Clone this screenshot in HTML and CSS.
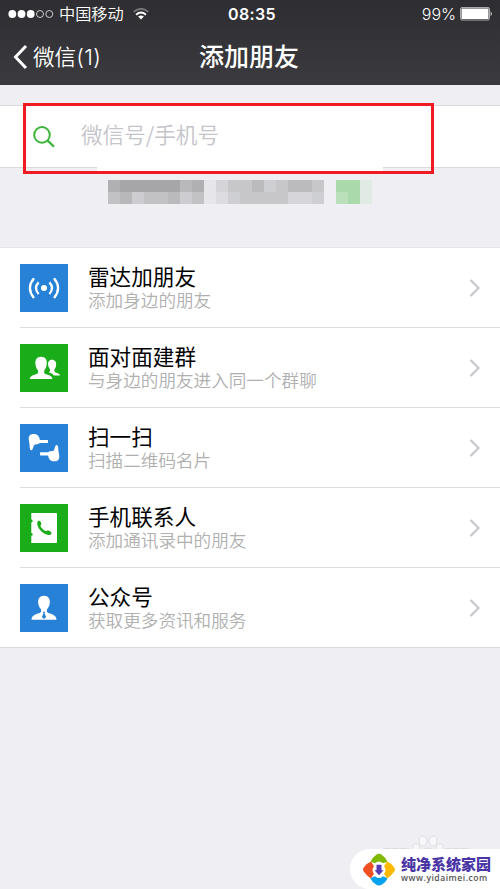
FILE: index.html
```html
<!DOCTYPE html>
<html lang="zh-CN">
<head>
<meta charset="utf-8">
<title>添加朋友</title>
<link rel="stylesheet" href="styles.css">
</head>
<body>
<header class="top">
  <div class="status">
    <div class="carrier">
      <svg class="signal" width="46" height="10" viewBox="0 0 46 10"><g fill="#fff"><circle cx="4.3" cy="5" r="3.9"/><circle cx="13.5" cy="5" r="3.9"/><circle cx="22.7" cy="5" r="3.9"/></g><g fill="none" stroke="#d8d8da" stroke-width=".9"><circle cx="32" cy="5" r="3.5"/><circle cx="41.3" cy="5" r="3.5"/></g></svg>
      <span class="operator">中国移动</span>
      <svg class="wifi" width="16" height="12" viewBox="0 0 16 12"><path d="M.7 3.9Q8-2.2 15.3 3.9" fill="none" stroke="#77777b" stroke-width="1.8"/><path d="M3.1 6.7Q8 2.5 12.9 6.7" fill="none" stroke="#fff" stroke-width="1.9"/><path d="M8 11.5 5.1 8.6Q8 6.3 10.9 8.6Z" fill="#fff"/></svg>
    </div>
    <div class="clock">08:35</div>
    <div class="power"><span>99%</span>
      <svg width="33" height="14" viewBox="0 0 33 14"><rect x=".5" y=".5" width="29" height="12.5" rx="1.5" fill="none" stroke="#aaaaac"/><rect x="1.5" y="1.5" width="27" height="10.5" fill="#fff"/><path d="M30.7 4.3Q32.6 6.7 30.7 9.2Z" fill="#fff"/></svg>
    </div>
  </div>
  <nav class="nav">
    <div class="back"><svg width="15" height="26" viewBox="0 0 15 26"><path d="M13 2 2.5 13 13 24" fill="none" stroke="#fff" stroke-width="3"/></svg><span>微信<span class="count">(1)</span></span></div>
    <h1>添加朋友</h1>
  </nav>
</header>
<main>
  <section class="search">
    <svg class="glass" width="22" height="22" viewBox="0 0 22 22"><circle cx="9" cy="8.9" r="7.8" fill="none" stroke="#3cb43b" stroke-width="2"/><path d="m14.7 14.6 6.3 6.2" stroke="#3cb43b" stroke-width="2.2"/></svg>
    <span class="placeholder">微信号/手机号</span>
    <div class="cover"></div>
    <div class="highlight"></div>
  </section>
  <svg class="mosaic" width="264" height="24" viewBox="0 0 22 2" shape-rendering="crispEdges">
    <path fill="#b0b0b2" d="M0 0h8v1H0z"/><path fill="#a6a6a8" d="M1 0h5v1H1z"/><path fill="#b9b9bc" d="M6 0h1v1H6z"/>
    <path fill="#c2c2c5" d="M0 1h8v1H0z"/><path fill="#b8b8bb" d="M1 1h1v1H1z"/><path fill="#cdcdd1" d="M2 1h1v1H2zM6 1h1v1H6z"/><path fill="#bababd" d="M5 1h1v1H5z"/>
    <path fill="#e6e6ea" d="M8 0h1v2H8z"/><path fill="#d5d5d9" d="M9 0h1v1H9z"/><path fill="#dddde1" d="M9 1h1v1H9z"/>
    <path fill="#c7c7ca" d="M10 0h8v2h-8z"/><path fill="#bbbbbe" d="M12 0h1v1h-1zM15 0h2v1h-2z"/><path fill="#cecfd2" d="M13 0h1v1h-1zM10 1h1v1h-1zM17 1h1v1h-1z"/><path fill="#d6d6da" d="M15 1h2v1h-2z"/>
    <path fill="#aadaac" d="M19 0h2v1h-2zM20 1h1v1h-1z"/><path fill="#b9e0bb" d="M19 1h1v1h-1z"/><path fill="#dfebe4" d="M21 0h1v2h-1z"/>
  </svg>
  <ul class="list">
    <li><svg class="icon blue" viewBox="0 0 48 48"><circle cx="24" cy="24" r="3" fill="#fff"/><g fill="none" stroke="#fff" stroke-width="2.3"><path d="M18.6 18.4Q13.4 24 18.6 30M29.4 18.4Q34.6 24 29.4 30M14 14.2Q5.8 24 14 34M34 14.2Q42.2 24 34 34"/></g></svg>
      <div class="text"><h2>雷达加朋友</h2><p>添加身边的朋友</p></div><svg class="chev" viewBox="0 0 12 18"><path d="m1.5 1 8 8-8 8"/></svg></li>
    <li><svg class="icon green" viewBox="0 0 48 48"><path fill="#fff" d="M32 15.7c-3.2 0-4.4 2.6-3.8 5.6.3 1.9 1 3.1 1.9 4.2v1.8l-1.4.9c2.2 1 4.4 1.6 5.2 3.2H40c0-2.2-5.6-2.4-5.6-4.1v-1.8c1-1.1 1.5-2.3 1.7-4.2.4-3.4-1-5.6-4.1-5.6Z"/><path fill="#fff" d="M21.1 12.8c-4.2 0-6.3 3-5.6 7.5.3 2.9 1.3 4.8 2.5 6.2v2.3c0 2.2-8.2 1.6-8.2 6.3h22.6c0-4.7-8.2-4.1-8.2-6.3v-2.3c1.2-1.4 2.2-3.3 2.5-6.2.7-4.5-1.4-7.5-5.6-7.5Z"/></svg>
      <div class="text"><h2>面对面建群</h2><p>与身边的朋友进入同一个群聊</p></div><svg class="chev" viewBox="0 0 12 18"><path d="m1.5 1 8 8-8 8"/></svg></li>
    <li><svg class="icon blue" viewBox="0 0 48 48"><path id="hand" fill="#fff" d="M8.7 15c0-3.6 2-4.9 5.3-4.9 3.5 0 5.3 2.2 5.9 5.8h8v3.2H20q-2 1.6-5.3 1.3c-1.9 1.8-1.1 4.9-3.3 5.9-2-.4-1.6-3.5-1.9-6Z"/><use href="#hand" transform="rotate(180 24 23.7)"/></svg>
      <div class="text"><h2>扫一扫</h2><p>扫描二维码名片</p></div><svg class="chev" viewBox="0 0 12 18"><path d="m1.5 1 8 8-8 8"/></svg></li>
    <li><svg class="icon green" viewBox="0 0 48 48"><path fill="#fff" d="M11.3 9H36a1 1 0 0 1 1 1v28a1 1 0 0 1-1 1H11.3v-7.2a1.4 1.4 0 0 0 0-2.8V18.4a1.4 1.4 0 0 0 0-2.8Z"/><path fill="#1aad19" d="M17.9 17.2c1.1-1 2.6-.2 3.2 1.6.5 1.5.1 2.3-.8 3 1.3 2.5 3.1 4.3 5.5 5.5 1-.8 2.2-1 3.7-.4 1.8.7 2.4 2 1.7 3-1.3 1.9-5 1.5-8.5-1.3-3.4-2.8-7-8.3-4.8-11.4Z"/></svg>
      <div class="text"><h2>手机联系人</h2><p>添加通讯录中的朋友</p></div><svg class="chev" viewBox="0 0 12 18"><path d="m1.5 1 8 8-8 8"/></svg></li>
    <li><svg class="icon blue" viewBox="0 0 48 48"><path fill="#fff" d="M24 11.8c-4.3 0-6.5 3.1-5.7 7.7.4 2.8 1.5 4.6 2.8 5.9v2.2c0 2.4-9.6 1.8-9.6 8.2h25c0-6.4-9.6-5.8-9.6-8.2v-2.2c1.3-1.3 2.4-3.1 2.8-5.9.8-4.6-1.4-7.7-5.7-7.7Z"/><path fill="#2782d7" d="M23 27.8h2l-.4 1.8 1.5 3.4-2.1 2-2.1-2 1.5-3.4Z"/></svg>
      <div class="text"><h2>公众号</h2><p>获取更多资讯和服务</p></div><svg class="chev" viewBox="0 0 12 18"><path d="m1.5 1 8 8-8 8"/></svg></li>
  </ul>
</main>
<svg class="paw" width="86" height="30" viewBox="0 0 86 30"><g fill="#f7f7f9" stroke="#dddde1"><ellipse cx="39" cy="6" rx="4" ry="5"/><ellipse cx="49" cy="6" rx="4" ry="5"/><ellipse cx="32" cy="13" rx="3.5" ry="4.5"/><ellipse cx="56" cy="13" rx="3.5" ry="4.5"/><path d="M33 24q3-11 11-11t11 11z"/></g><path d="M0 14h25M61 14h25" stroke="#dcdce0" stroke-width="2" stroke-dasharray="7 1"/></svg>
<aside class="brand">
  <svg width="32" height="33" viewBox="0 0 32 33"><path fill="#81b900" d="M7.5 8.8Q9 4.7 13 2q3-2.7 6 0 4 2.7 5.5 6.8L20 10.2q-4-3.3-8 0Z"/><path fill="#f25022" d="M8 8.4 11 13.2q-3 3.8 0 7.6l-3 4.8Q4.2 23.3 1.5 19.5q-3-3 0-6Q4.2 10 8 8.4Z"/><path fill="#ffb900" d="M24 8.4 21 13.2q3 3.8 0 7.6l3 4.8q3.8-2.3 6.5-6.1 3-3 0-6-2.7-3.5-6.5-5.1Z"/><path fill="#00a1ed" d="M7.5 25.2 12 23.2q4 3.8 8 0l4.5 2q-1.5 4-5.5 6.2-3 2.3-6 0-4-2.2-5.5-6.2Z"/><path fill="#553bb5" d="M13.5 11.8h5v5.4h2L16 22.2l-4.5-5h2Z"/></svg>
  <div class="brand-text"><b>纯净系统家园</b><span>www.yidaimei.com</span></div>
</aside>
</body>
</html>
```
FILE: styles.css
```css
* { box-sizing: border-box; }
body {
  margin: 0;
  height: 889px;
  position: relative;
  overflow: hidden;
  background: #efeef3;
  font-family: Inter, "Noto Sans CJK SC", sans-serif;
}
h1, h2, p, ul { margin: 0; padding: 0; }
svg { display: block; flex: none; }
span, h1, h2, p { white-space: nowrap; }

.top {
  height: 85px;
  background: linear-gradient(#2e2d32, #3b3a3e);
  color: #fff;
}
.status {
  height: 28px;
  display: grid;
  grid-template-columns: 1fr auto 1fr;
  align-items: center;
}
.carrier { display: flex; align-items: center; padding-left: 8px; }
.operator { margin: 0 9px 0 5px; padding-bottom: 2px; font: 350 16.2px/22px "Noto Sans CJK SC", sans-serif; }
.clock { font-size: 16px; font-weight: 600; letter-spacing: .4px; padding-left: 4px; }
.power { display: flex; align-items: center; justify-content: flex-end; gap: 4px; padding-right: 7px; font-size: 16px; font-weight: 300; }
.nav {
  height: 57px;
  display: grid;
  grid-template-columns: 199px 1fr;
  align-items: center;
}
.back { display: flex; align-items: center; gap: 5px; padding-left: 13px; font: 350 21.6px/32px "Noto Sans CJK SC", sans-serif; }
.back > span { padding-bottom: 1px; }
.count { font-family: Inter, sans-serif; font-weight: 300; font-size: 22px; letter-spacing: .4px; }
h1 { padding-bottom: 4px; font: 500 25px/36px "Noto Sans CJK SC", sans-serif; }

.search {
  position: relative;
  height: 63px;
  margin-top: 20px;
  padding-left: 33px;
  display: flex;
  align-items: center;
  background: #fff;
  border-top: 1px solid #dad9dd;
  border-bottom: 1px solid #dad9dd;
}
.placeholder { margin-left: 26px; padding-bottom: 5px; font: 350 21.6px/30px "Noto Sans CJK SC", sans-serif; color: #c4c4ca; }
.cover { position: absolute; left: 97px; top: 59px; width: 286px; height: 6px; background: #fff; }
.highlight { position: absolute; left: 23px; top: -3px; width: 411px; height: 71px; border: 3px solid #f01a25; }
.mosaic { margin: 12px 0 43px 108px; }

.list { list-style: none; background: #fff; border-top: 1px solid #e6e6ea; border-bottom: 1px solid #d9d9dd; }
.list li {
  height: 80px;
  margin-left: 20px;
  padding-right: 19px;
  display: flex;
  align-items: center;
  border-bottom: 1px solid #dedee1;
}
.list li:last-child { height: 79px; border-bottom: 0; }
.icon { width: 48px; height: 48px; }
.blue { background: #2782d7; }
.green { background: #1aad19; }
.text { flex: 1; margin-left: 20px; padding-bottom: 2px; }
h2 { font: 400 21.6px/26px "Noto Sans CJK SC", sans-serif; color: #000; }
p { font: 350 17.6px/22px "Noto Sans CJK SC", sans-serif; color: #b0b0b0; }
.chev { width: 12px; height: 18px; fill: none; stroke: #c7c7cc; stroke-width: 2.2; }

.paw { position: absolute; left: 384px; top: 835px; }
.brand {
  position: absolute;
  right: 0;
  bottom: 0;
  width: 150px;
  height: 40px;
  padding-left: 13px;
  display: flex;
  align-items: center;
  gap: 6px;
  background: #fff;
  border-radius: 20px 0 0 20px;
}
.brand-text { display: flex; flex-direction: column; }
.brand b { font: 900 15px/18px "Noto Sans CJK SC", sans-serif; color: #4a35a5; white-space: nowrap; }
.brand span { font: 600 8.6px/10px "Open Sans", sans-serif; letter-spacing: .5px; color: #555; }
```
